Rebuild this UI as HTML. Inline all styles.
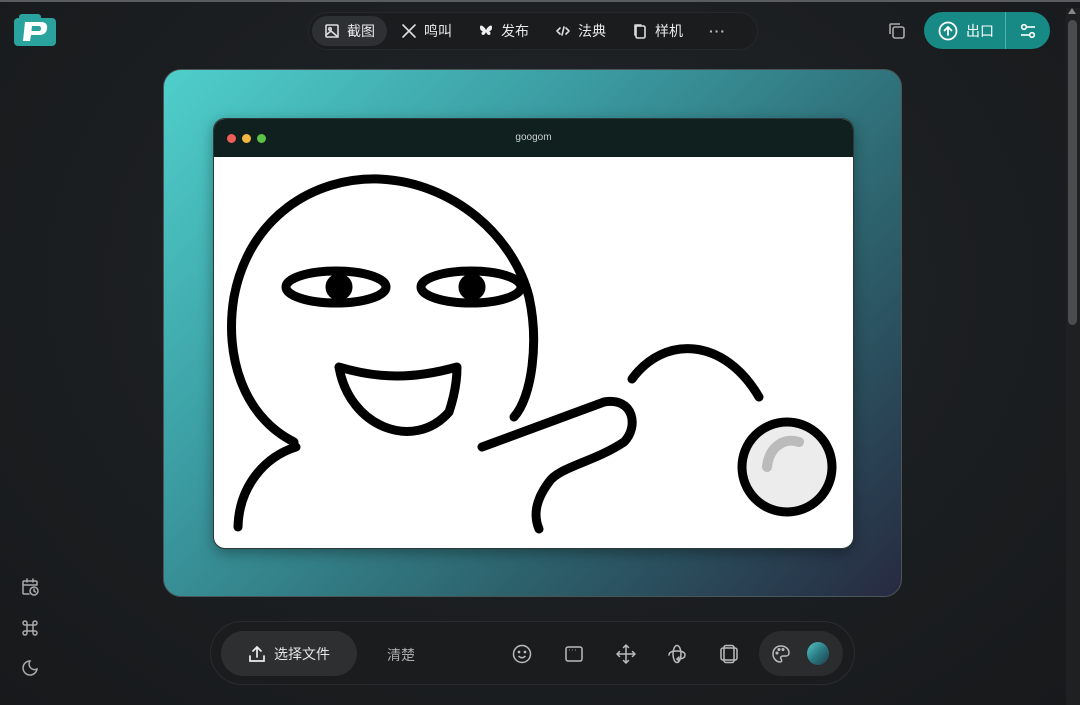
<!DOCTYPE html>
<html><head><meta charset="utf-8"><style>
*{margin:0;padding:0;box-sizing:border-box}
body{width:1080px;height:705px;overflow:hidden;background:radial-gradient(ellipse at 50% 40%,#22272a 0%,#1b1e20 60%,#17191b 100%);font-family:"Liberation Sans","Noto Sans CJK SC",sans-serif;color:#e6e6e6;position:relative}
.topline{position:absolute;top:0;left:0;right:0;height:2px;background:#5a5d60}
.nav{position:absolute;left:308px;top:12px;width:450px;height:38px;border-radius:19px;background:#1a1c1e;border:1px solid #25282a;display:flex;align-items:center;padding-left:3px}
.nav .it{display:flex;align-items:center;height:30px;padding:0 12px;border-radius:15px;font-size:14px;color:#e8e8e8;gap:7px;margin-right:2px}
.nav .it.act{background:#2e3134}
.ico{width:16px;height:16px;stroke:#ddd;fill:none;stroke-width:1.6;stroke-linecap:round;stroke-linejoin:round}
.exp{position:absolute;left:924px;top:12px;width:126px;height:37px;border-radius:19px;background:#178a85;display:flex;align-items:center}
.frame{position:absolute;left:163px;top:69px;width:739px;height:528px;border-radius:18px;background:linear-gradient(135deg,#4fcfcb 0%,#3a9aa0 35%,#2c5f6a 70%,#272a40 100%);border:1px solid #4a5558}
.win{position:absolute;left:49px;top:48px;width:641px;height:431px;border-radius:12px;overflow:hidden;background:#fff;box-shadow:0 4px 14px rgba(0,0,0,.35);border:1px solid #2a3a3a}
.tb{height:38px;background:#10201f;position:relative}
.dot{position:absolute;top:15px;width:9px;height:9px;border-radius:50%}
.bar{position:absolute;left:210px;top:621px;width:645px;height:64px;border-radius:32px;background:#1b1c1e;border:1px solid #2a2c2e}
.sel{position:absolute;left:10px;top:9px;width:136px;height:45px;border-radius:23px;background:#2d2f31;display:flex;align-items:center;justify-content:center;gap:8px;font-size:14px}
.bi{position:absolute;top:22px}
.pal{position:absolute;left:548px;top:9px;width:84px;height:45px;border-radius:23px;background:#2a2c2e}
.side{position:absolute;left:21px}
</style></head><body>
<div class="topline"></div>
<svg style="position:absolute;left:14px;top:14px" width="44" height="33" viewBox="0 0 44 33"><rect x="0" y="4" width="42" height="28" rx="4" fill="#2aa39e"/><rect x="5" y="0" width="22" height="8" rx="3" fill="#2aa39e"/><path d="M9 27 L11 8 H27 Q34 8 33 15 Q32 21 25 21 H17 L16 27 Z" fill="#fff"/><path d="M18 12 H25 Q27 12 27 15 Q27 17 25 17 H17.5Z" fill="#2aa39e"/></svg>
<div class="nav">
<div class="it act"><svg class="ico" viewBox="0 0 16 16"><rect x="2" y="2" width="12" height="12" rx="1"/><circle cx="6" cy="6" r="1.2"/><path d="M2 12 L7 8 L14 14"/></svg>截图</div>
<div class="it"><svg class="ico" viewBox="0 0 16 16"><path d="M2 2 L14 14 M14 2 L2 14"/></svg>鸣叫</div>
<div class="it"><svg class="ico" viewBox="0 0 16 16" style="fill:#eee;stroke:none"><path d="M8 7 C6 3 2 1 2 4 C2 7 3 8 5 8 C3 9 3 12 5 12 C7 12 8 9 8 9 C8 9 9 12 11 12 C13 12 13 9 11 8 C13 8 14 7 14 4 C14 1 10 3 8 7Z"/></svg>发布</div>
<div class="it"><svg class="ico" viewBox="0 0 16 16"><path d="M5 5 L2 8 L5 11 M11 5 L14 8 L11 11 M9 4 L7 12"/></svg>法典</div>
<div class="it"><svg class="ico" viewBox="0 0 16 16"><rect x="4" y="3" width="9" height="12" rx="1.5"/><path d="M3 12 V2 H9"/></svg>样机</div>
<div class="it" style="color:#bbb;letter-spacing:1px;font-weight:bold">···</div>
</div>
<svg style="position:absolute;left:887px;top:21px" width="20" height="20" viewBox="0 0 20 20" fill="none" stroke="#aaa" stroke-width="1.6"><rect x="6" y="6" width="11" height="11" rx="2"/><path d="M3 13 V4 Q3 3 4 3 H13"/></svg>
<div class="exp">
<svg style="margin-left:14px" width="20" height="20" viewBox="0 0 20 20" fill="none" stroke="#fff" stroke-width="1.8" stroke-linecap="round"><circle cx="10" cy="10" r="8.5"/><path d="M10 14 V6 M6.5 9.5 L10 6 L13.5 9.5"/></svg>
<span style="margin-left:8px;font-size:14px;color:#fff">出口</span>
<div style="position:absolute;left:81px;top:0;width:1px;height:37px;background:#4fb3ae"></div>
<svg style="position:absolute;left:95px;top:10px" width="18" height="18" viewBox="0 0 18 18" fill="none" stroke="#fff" stroke-width="1.6"><circle cx="5" cy="5" r="2.3"/><path d="M7.5 5 H16"/><circle cx="13" cy="13" r="2.3"/><path d="M2 13 H10.5"/></svg>
</div>
<div style="position:absolute;left:1066px;top:8px;width:14px;height:697px;background:#1e2022"></div>
<div style="position:absolute;left:1068px;top:20px;width:9px;height:305px;border-radius:5px;background:#4a4c4e"></div>
<div style="position:absolute;left:1068px;top:8px;width:0;height:0;border:4px solid transparent;border-bottom:6px solid #888;margin-top:-4px"></div>
<div class="frame"><div class="win"><div class="tb">
<div class="dot" style="left:13px;background:#ec5f57"></div><div class="dot" style="left:28px;background:#f3b740"></div><div class="dot" style="left:43px;background:#5bc445"></div>
<div style="position:absolute;left:0;right:0;top:13px;text-align:center;font-size:10px;color:#c9d0d0">googom</div></div>
<svg width="641" height="393" viewBox="0 0 641 393" fill="none" stroke="#000" stroke-width="9" stroke-linecap="round" stroke-linejoin="round">
<path d="M80 285 C 30 260 10 200 20 140 C 35 60 100 20 165 22 C 240 25 300 80 315 140 C 325 185 318 240 300 260"/>
<path d="M82 290 C 50 300 25 330 24 370"/>
<path d="M268 290 L 390 245 C 420 240 425 270 410 285 C 380 305 345 310 335 325 C 320 345 320 360 325 372"/>
<ellipse cx="122" cy="130" rx="50" ry="16"/><ellipse cx="257" cy="130" rx="50" ry="16"/>
<circle cx="125" cy="130" r="9" fill="#000"/><circle cx="258" cy="130" r="9" fill="#000"/>
<path d="M125 210 C 135 270 200 295 235 255 C 240 240 243 225 243 210 C 200 222 165 222 125 210 Z"/>
<path d="M418 222 C 450 178 510 180 545 240"/>
<circle cx="573" cy="310" r="45" fill="#ececec"/>
<path d="M553 310 C 555 290 570 280 585 285" stroke="#bbb" stroke-width="10"/>
</svg></div></div>
<div class="bar">
<div class="sel"><svg width="18" height="18" viewBox="0 0 18 18" fill="none" stroke="#eee" stroke-width="1.7" stroke-linecap="round"><path d="M2 11 V16 H16 V11 M9 12 V2 M5 6 L9 2 L13 6"/></svg>选择文件</div>
<div style="position:absolute;left:176px;top:23px;font-size:14px;color:#aaa">清楚</div>
<svg class="bi" style="left:301px" width="20" height="20" viewBox="0 0 20 20" fill="none" stroke="#bbb" stroke-width="1.5"><circle cx="10" cy="10" r="8.5"/><circle cx="7" cy="8" r=".6"/><circle cx="13" cy="8" r=".6"/><path d="M6.5 12 Q10 15.5 13.5 12"/></svg>
<svg class="bi" style="left:353px" width="20" height="20" viewBox="0 0 20 20" fill="none" stroke="#bbb" stroke-width="1.5"><rect x="2" y="3" width="16" height="14" rx="2"/><path d="M5 6h.5M8 6h.5M11 6h.5"/></svg>
<svg class="bi" style="left:405px" width="20" height="20" viewBox="0 0 20 20" fill="none" stroke="#bbb" stroke-width="1.5" stroke-linecap="round"><path d="M10 1 V19 M1 10 H19 M7.5 3.5 L10 1 L12.5 3.5 M7.5 16.5 L10 19 L12.5 16.5 M3.5 7.5 L1 10 L3.5 12.5 M16.5 7.5 L19 10 L16.5 12.5"/></svg>
<svg class="bi" style="left:456px" width="20" height="20" viewBox="0 0 20 20" fill="none" stroke="#bbb" stroke-width="1.5" stroke-linecap="round"><ellipse cx="10" cy="10" rx="4" ry="8.5"/><path d="M2 11 Q2 7 10 7 Q18 7 18 11 Q18 15 10 15"/><path d="M12 13 L10 15 L12 17"/></svg>
<svg class="bi" style="left:508px" width="20" height="20" viewBox="0 0 20 20" fill="none" stroke="#bbb" stroke-width="1.5"><rect x="2" y="4" width="16" height="12" rx="2"/><rect x="5" y="1.5" width="10" height="17" rx="2"/></svg>
<div class="pal"><svg style="position:absolute;left:12px;top:13px" width="20" height="20" viewBox="0 0 20 20" fill="none" stroke="#bbb" stroke-width="1.5"><path d="M10 2 C5 2 2 5.5 2 10 C2 14.5 5.5 18 9 18 C11 18 11 16 10 15 C9 13.5 10 12 12 12 H15 C17 12 18 10.5 18 9 C18 5 14.5 2 10 2Z"/><circle cx="6" cy="9" r=".8"/><circle cx="8" cy="5.5" r=".8"/><circle cx="12" cy="5.5" r=".8"/></svg>
<div style="position:absolute;left:48px;top:11px;width:22px;height:23px;border-radius:50%;background:linear-gradient(135deg,#56c9c7,#2b7b84 50%,#1f3e4c)"></div></div>
</div>
<svg class="side" style="top:577px" width="19" height="20" viewBox="0 0 19 20" fill="none" stroke="#aaa" stroke-width="1.5" stroke-linecap="round"><path d="M8 17 H3 Q2 17 2 16 V5 Q2 4 3 4 H15 Q16 4 16 5 V8 M2 8 H16 M6 2 V5 M12 2 V5"/><circle cx="13" cy="14" r="4"/><path d="M13 12 V14 L14.5 15"/></svg>
<svg class="side" style="top:619px" width="18" height="18" viewBox="0 0 18 18" fill="none" stroke="#aaa" stroke-width="1.5"><path d="M6 6 H12 V12 H6Z M6 6 V4 A2 2 0 1 0 4 6 H6 M12 6 V4 A2 2 0 1 1 14 6 H12 M6 12 V14 A2 2 0 1 1 4 12 H6 M12 12 V14 A2 2 0 1 0 14 12 H12"/></svg>
<svg class="side" style="top:659px" width="18" height="18" viewBox="0 0 18 18" fill="none" stroke="#aaa" stroke-width="1.5"><path d="M9 2 A7 7 0 1 0 16 10 A5.5 5.5 0 0 1 9 2Z"/></svg>
</body></html>
